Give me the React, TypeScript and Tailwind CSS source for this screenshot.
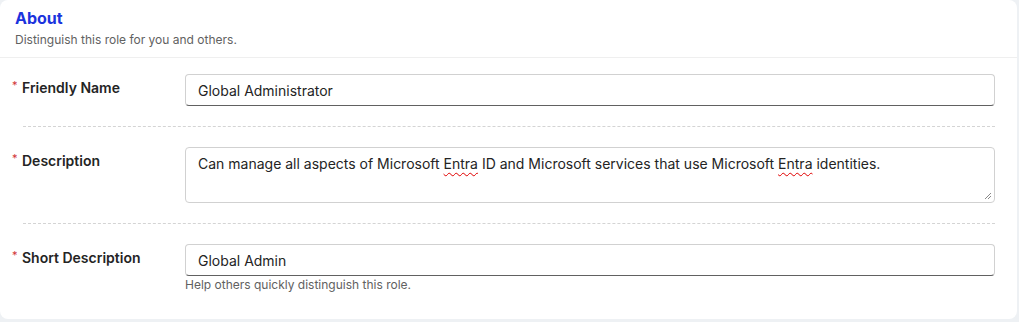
import React from "react";

const font = { fontFamily: "Inter, 'Noto Sans', sans-serif" };

function Req() {
  return (
    <span className="absolute left-[12px] top-[6px] text-[11px] leading-[11px] text-[#d13438]">*</span>
  );
}

function Label({ children }: { children: React.ReactNode }) {
  return (
    <div className="relative w-[185px] shrink-0 pt-[4px]">
      <Req />
      <div className="pl-[22px] text-[14px] leading-[20px] font-semibold text-[#242424]">{children}</div>
    </div>
  );
}

function Squiggle({ children }: { children: React.ReactNode }) {
  return (
    <span className="underline decoration-wavy decoration-[#e00000] decoration-[1px] underline-offset-[3px]">
      {children}
    </span>
  );
}

export default function App() {
  return (
    <div className="w-[1019px] h-[322px] bg-[#eef1f4] overflow-hidden" style={font}>
      <div className="w-[1017px] h-[319px] bg-white rounded-lg flex flex-col">
        <div className="px-[15px] pt-[8px] pb-[9px] border-b border-[#efefef]">
          <div className="text-[16px] leading-[20px] font-bold text-[#1b33dd]">About</div>
          <div className="mt-[4px] text-[12px] leading-[16px] text-[#616161]">Distinguish this role for you and others.</div>
        </div>

        <div className="flex pt-[16px] pb-[20px] pr-[22px]">
          <Label>Friendly Name</Label>
          <div className="flex-1 h-[32px] rounded-[4px] border border-[#d1d1d1] border-b-[#616161] px-[12px] flex items-center text-[14px] text-[#242424]">
            Global Administrator
          </div>
        </div>

        <div className="ml-[23px] mr-[22px] border-t border-dashed border-[#d4d4d4]" />

        <div className="flex pt-[20px] pb-[20px] pr-[22px]">
          <Label>Description</Label>
          <div className="relative flex-1 h-[56px] rounded-[4px] border border-[#d1d1d1] px-[12px] pt-[6px] text-[14px] leading-[20px] text-[#242424]">
            Can manage all aspects of Microsoft <Squiggle>Entra</Squiggle> ID and Microsoft services that use Microsoft <Squiggle>Entra</Squiggle> identities.
            <svg className="absolute right-[2px] bottom-[2px]" width="8" height="8" viewBox="0 0 8 8">
              <line x1="1" y1="7" x2="7" y2="1" stroke="#8a8a8a" strokeWidth="1" />
              <line x1="4" y1="7" x2="7" y2="4" stroke="#8a8a8a" strokeWidth="1" />
            </svg>
          </div>
        </div>

        <div className="ml-[23px] mr-[22px] border-t border-dashed border-[#d4d4d4]" />

        <div className="flex pt-[20px] pr-[22px]">
          <Label>Short Description</Label>
          <div className="flex-1">
            <div className="h-[32px] rounded-[4px] border border-[#d1d1d1] border-b-[#616161] px-[12px] flex items-center text-[14px] text-[#242424]">
              Global Admin
            </div>
            <div className="mt-[1px] text-[12px] leading-[16px] text-[#616161]">Help others quickly distinguish this role.</div>
          </div>
        </div>
      </div>
    </div>
  );
}
